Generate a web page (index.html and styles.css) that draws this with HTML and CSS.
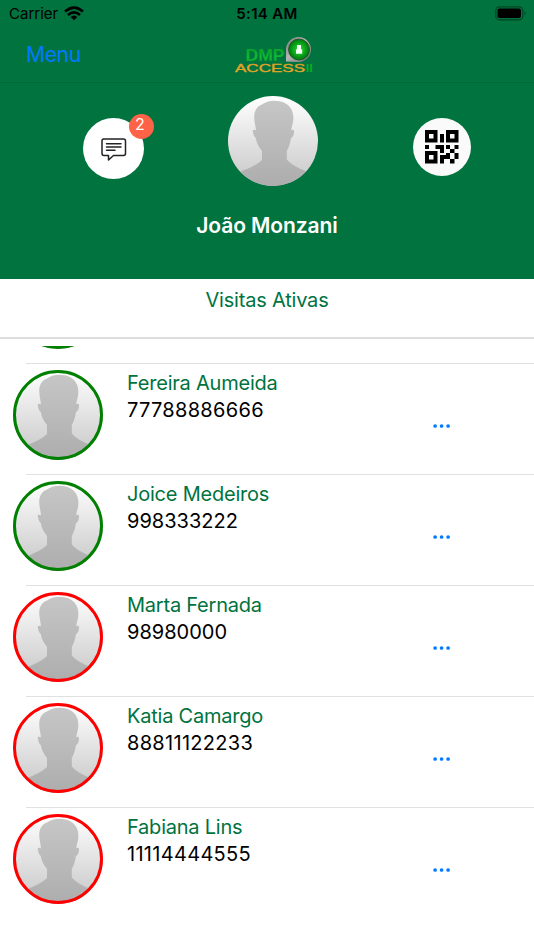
FILE: index.html
```html
<!DOCTYPE html>
<html lang="pt-BR">
<head>
<meta charset="utf-8">
<title>DMP Access II</title>
<link rel="stylesheet" href="styles.css">
</head>
<body>
<svg class="defs" width="0" height="0" aria-hidden="true">
  <defs>
    <linearGradient id="bg" x1="0" y1="0" x2="0" y2="1"><stop offset="0" stop-color="#fff"/><stop offset="1" stop-color="#c6c6c6"/></linearGradient>
    <linearGradient id="man" x1="0" y1="0" x2="0" y2="1"><stop offset="0" stop-color="#c6c6c6"/><stop offset="1" stop-color="#adadad"/></linearGradient>
    <clipPath id="round"><circle cx="45" cy="45" r="45"/></clipPath>
    <symbol id="person" viewBox="0 0 90 90">
      <g clip-path="url(#round)">
        <rect width="90" height="90" fill="url(#bg)"/>
        <path fill="url(#man)" d="M0 90V83C4 79.500 8 77.500 13 75.500C21 72.500 29 69 34 64V55C30.500 50.500 28.500 47 27.800 42C26 41 25 37 24.700 34.500Q25 33.200 28 34.200C27.500 29 26 25 26.200 20C26.500 14.500 29 10.500 34 8.500Q39 4.700 46 4.700C54 4.700 59 7.500 61.800 11C65.500 15.500 65.800 21 65 26C64.500 29 63.500 31 63.300 34.200Q66 33.200 66 35C66 38 65.200 41.500 63 42C62.300 47 61 51 58.800 55V63.500C63 68.500 70 72 77.500 75C82 77 86 79 90 83V90Z"/>
      </g>
    </symbol>
    <symbol id="dots" viewBox="0 0 18 4"><circle cx="2.100" cy="2" r="1.850"/><circle cx="8.600" cy="2" r="1.850"/><circle cx="15.100" cy="2" r="1.850"/></symbol>
  </defs>
</svg>
<header class="header">
  <div class="status">
    <div class="carrier"><span class="carrier-name">Carrier</span>
      <svg width="20" height="15" viewBox="0 0 20 15" fill="none" stroke="#000" stroke-width="2.700"><path d="M1 5.500Q10-2.300 19 5.500"/><path d="M4 9Q10 3.800 16 9"/><path d="M6.700 11Q10 8 13.300 11L10 14.300Z" fill="#000" stroke="none"/></svg>
    </div>
    <span class="time">5:14 AM</span>
    <svg class="battery" width="32" height="15" viewBox="0 0 32 15"><rect x=".8" y=".8" width="27" height="13" rx="3.800" fill="none" stroke="#004725" stroke-width="1.200"/><rect x="2.500" y="2.500" width="23.500" height="9.600" rx="2"/><path d="M29.500 5Q32 7.300 29.500 9.600Z" fill="#004725"/></svg>
  </div>
  <nav class="nav">
    <a class="menu">Menu</a>
    <svg class="logo" width="80" height="40" viewBox="0 0 80 40">
      <defs>
        <linearGradient id="dmp" x1="0" y1="0" x2="0" y2="1"><stop offset="0" stop-color="#079c24"/><stop offset=".6" stop-color="#11b932"/><stop offset="1" stop-color="#089024"/></linearGradient>
        <linearGradient id="gold" x1="0" y1="0" x2="0" y2="1"><stop offset="0" stop-color="#d89b20"/><stop offset="1" stop-color="#f3ac2c"/></linearGradient>
        <linearGradient id="metal" x1="0" y1="0" x2="1" y2="1"><stop offset="0" stop-color="#777"/><stop offset=".45" stop-color="#b5b5b5"/><stop offset="1" stop-color="#606863"/></linearGradient>
        <radialGradient id="lens"><stop offset="0" stop-color="#2be03c"/><stop offset=".6" stop-color="#0aa51a"/><stop offset="1" stop-color="#00760c"/></radialGradient>
      </defs>
      <text class="logo-dmp" x="10.500" y="27" textLength="39" lengthAdjust="spacingAndGlyphs" fill="url(#dmp)">DMP</text>
      <path d="M51 27.500V15.500A12.500 12.500 0 1 1 63.500 28Z" fill="url(#metal)"/>
      <circle cx="64" cy="15.500" r="10.500" fill="url(#lens)" stroke="#174d22" stroke-width=".8"/>
      <path d="M62 11h4v4l1.200.7v4h-6.200v-4l1-.7Z" fill="#f5fff3"/>
      <text class="logo-access" x="0" y="38.300" textLength="70" lengthAdjust="spacingAndGlyphs" fill="url(#gold)">ACCESS</text>
      <text class="logo-ii" x="70.700" y="38.300" textLength="7" lengthAdjust="spacingAndGlyphs">II</text>
    </svg>
  </nav>
  <section class="profile">
    <div class="messages">
      <svg width="26" height="24" viewBox="0 0 26 24" fill="none" stroke="#222226" stroke-width="1.500" stroke-linejoin="round" stroke-linecap="round"><path d="M2.500 1H22.500Q24.500 1 24.500 3V15.500Q24.500 17.500 22.500 17.500H12.500L7.500 22V17.500H3Q1 17.500 1 15.500V3Q1 1 2.500 1Z"/><path d="M5.500 5.700H20M5.500 9H20M5.500 12.300H14"/></svg>
      <span class="badge">2</span>
    </div>
    <svg class="me" width="90" height="90"><use href="#person"/></svg>
    <div class="qr">
      <svg width="34" height="34" viewBox="0 0 34 34"><path fill-rule="evenodd" d="M0 0h12.500v12.500H0ZM4 4v4.500h4.500V4ZM21 0h12.500v12.500H21ZM25 4v4.500h4.500V4ZM0 21h12.500v12.500H0ZM4 25v4.500h4.500V25ZM15 4h4v8.500h-4Z"/><path d="M0 15h4v4H0ZM10.500 15H19v8h-4v-4h-4.500ZM21 15h4v4h-4ZM29.500 15h4v4h-4ZM25 19h4.500v4H25ZM21 23h4v6h-6v4.500h-4V25h6ZM29.500 23h4v6h-4ZM25 29h4.500v4.500H25Z"/></svg>
    </div>
  </section>
  <h1 class="user">João Monzani</h1>
</header>
<main>
  <h2 class="title">Visitas Ativas</h2>
  <div class="list">
    <article class="row active first"><svg class="avatar" viewBox="0 0 90 90"><use href="#person"/><circle cx="45" cy="45" r="43.500"/></svg></article>
    <article class="row active"><svg class="avatar" viewBox="0 0 90 90"><use href="#person"/><circle cx="45" cy="45" r="43.500"/></svg><div class="info"><p class="name">Fereira Aumeida</p><p class="number wide">77788886666</p></div><svg class="more"><use href="#dots"/></svg></article>
    <article class="row active"><svg class="avatar" viewBox="0 0 90 90"><use href="#person"/><circle cx="45" cy="45" r="43.500"/></svg><div class="info"><p class="name">Joice Medeiros</p><p class="number">998333222</p></div><svg class="more"><use href="#dots"/></svg></article>
    <article class="row"><svg class="avatar" viewBox="0 0 90 90"><use href="#person"/><circle cx="45" cy="45" r="43.500"/></svg><div class="info"><p class="name">Marta Fernada</p><p class="number">98980000</p></div><svg class="more"><use href="#dots"/></svg></article>
    <article class="row"><svg class="avatar" viewBox="0 0 90 90"><use href="#person"/><circle cx="45" cy="45" r="43.500"/></svg><div class="info"><p class="name">Katia Camargo</p><p class="number wide">88811122233</p></div><svg class="more"><use href="#dots"/></svg></article>
    <article class="row last"><svg class="avatar" viewBox="0 0 90 90"><use href="#person"/><circle cx="45" cy="45" r="43.500"/></svg><div class="info"><p class="name">Fabiana Lins</p><p class="number wide">11114444555</p></div><svg class="more"><use href="#dots"/></svg></article>
  </div>
</main>
</body>
</html>
```

FILE: styles.css
```css
* { box-sizing: border-box; margin: 0; padding: 0; }
body { width: 534px; height: 950px; overflow: hidden; background: #fff; font-family: Inter, sans-serif; color: #000; }
svg { display: block; flex: none; }
.defs { position: absolute; }
.header { height: 279px; background: #00733f; }
.status { height: 28px; display: grid; grid-template-columns: 1fr auto 1fr; align-items: center; padding: 0 7px 0 9px; font-size: 15px; line-height: 28px; }
.carrier { display: flex; align-items: center; gap: 6px; }
.carrier svg { margin-top: -2px; }
.time { font-weight: 600; letter-spacing: .35px; margin-left: -2px; }
.battery { justify-self: end; margin-top: -2px; }
.nav { height: 55px; display: flex; border-bottom: 1px solid #00693a; }
.menu { width: 209px; padding: 13px 0 0 26px; color: #007aff; font-size: 21px; letter-spacing: -.3px; line-height: 28px; }
.logo { margin: 6px 0 0 26px; }
.logo-dmp { font: 700 17px "Liberation Sans", sans-serif; }
.logo-access { font: 400 10.500px "Liberation Sans", sans-serif; stroke: #e4a526; stroke-width: .3px; }
.logo-ii { font: 700 11px "Liberation Sans", sans-serif; fill: #0dac27; }
.profile { display: flex; height: 103px; padding-top: 13px; }
.messages { position: relative; display: grid; place-items: center; width: 61px; height: 61px; margin: 22px 0 0 82.500px; border-radius: 50%; background: #fff; }
.messages svg { margin: 3px 0 0 1px; }
.badge { position: absolute; top: -4px; right: -10px; width: 25px; height: 25px; border-radius: 50%; background: #ff6347; color: #fff; font-size: 16px; line-height: 20px; text-align: center; padding-right: 2px; }
.me { margin-left: 84.800px; }
.qr { display: grid; place-items: center; width: 58px; height: 58px; margin: 22px 0 0 94.300px; border-radius: 50%; background: #fafafa; }
.user { margin-top: 26px; color: #fff; font-size: 21px; font-weight: 600; letter-spacing: -.1px; line-height: 28px; text-align: center; }
.title { height: 60px; border-bottom: 2px solid #ddd; padding-top: 7px; color: #00733f; font-size: 20px; letter-spacing: -.2px; line-height: 28px; font-weight: 400; text-align: center; }
.list { margin-top: 7px; height: 604px; overflow: hidden; }
.row { display: flex; height: 111px; padding: 6px 0 0 13px; background: linear-gradient(#e1e1e1, #e1e1e1) 26px 110px / 508px 1px no-repeat; }
.first { margin-top: -93px; }
.last { background: none; }
.avatar { width: 90px; height: 90px; }
.avatar circle { fill: none; stroke: red; stroke-width: 3px; }
.active .avatar circle { stroke: green; }
.info { width: 306px; margin-left: 24px; font-size: 20px; white-space: nowrap; }
.name { color: #00733f; height: 26px; line-height: 26px; letter-spacing: -.22px; }
.number { line-height: 28px; }
.wide { letter-spacing: .3px; }
.more { width: 18px; height: 4px; margin-top: 53.500px; fill: #007aff; }
```
